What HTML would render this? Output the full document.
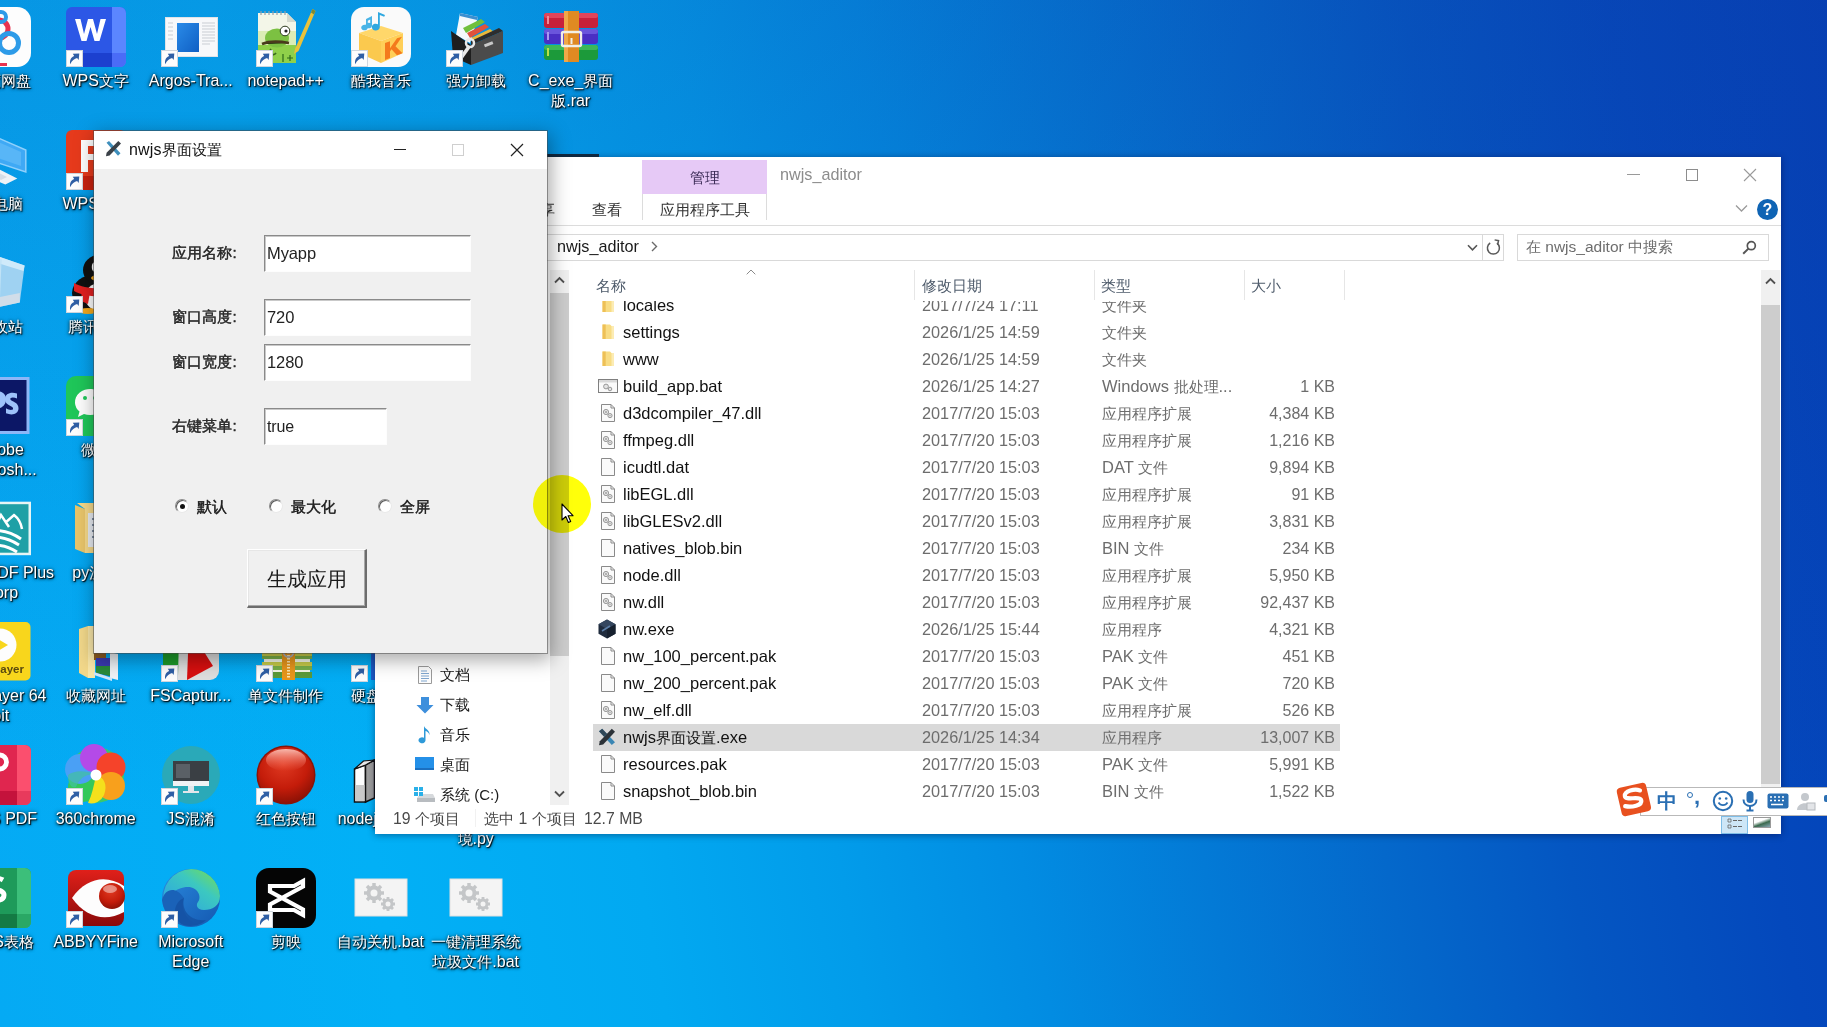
<!DOCTYPE html>
<html><head><meta charset="utf-8"><title>desktop</title>
<style>
*{margin:0;padding:0;box-sizing:border-box}
html,body{width:1827px;height:1027px;overflow:hidden;background:#0390e2}
body{font-family:"Liberation Sans",sans-serif;color:#1b1b1b}
#root{position:relative;width:1827px;height:1027px;overflow:hidden}
.abs{position:absolute}
#wall{position:absolute;left:0;top:0;width:1827px;height:1027px;
 background:linear-gradient(180deg,rgba(20,60,160,.20) 0%,rgba(20,60,160,.14) 25%,rgba(20,60,160,.07) 50%,rgba(20,60,160,0) 80%),linear-gradient(79deg,#05aaf4 0%,#02b0f6 20%,#02a9f1 33%,#029cea 43%,#028ce2 52%,#037ad6 61%,#0468cb 70%,#0456c2 79%,#0448bc 89%,#0440b6 100%);}
/* desktop icons */
.di{position:absolute;width:96px;height:110px;text-align:center;color:#fff;font-size:16px;line-height:20px;
 text-shadow:1px 1px 1px rgba(0,0,0,.9),0 1px 3px rgba(0,0,0,.85),0 0 4px rgba(0,0,0,.55);white-space:nowrap}
.di .ic{position:absolute;left:18px;top:0;width:60px;height:60px;overflow:visible}
.di .lb{position:absolute;left:-22px;width:140px;top:64px;text-align:center}
.di .sc{position:absolute;left:18px;top:43px;width:17px;height:17px}
/* explorer */
#exp{position:absolute;left:375px;top:157px;width:1406px;height:677px;background:#fff;font-size:16px;color:#1a1a1a;box-shadow:0 1px 7px rgba(0,0,40,.42)}
.flist{position:absolute;left:0;top:144px;width:1385px;height:507px;overflow:hidden}
.row{position:absolute;left:218px;width:747px;height:27px;line-height:27px;white-space:nowrap;font-size:16.5px;letter-spacing:0}
.row .nm{letter-spacing:0}
.row.sel{background:#d9d9d9}
.row .fi{position:absolute;left:226px;top:3.500px;width:18px;height:18px}
.row > span{position:absolute;top:0}
.row .fi{left:5.500px}
.row .nm{left:30px;color:#111}
.row .dt{left:329px;color:#6d6d6d}
.row .ty{left:509px;color:#6d6d6d}
.row .sz{right:5px;color:#6d6d6d;text-align:right}
/* dialog */
#dlg{position:absolute;left:94px;top:131px;width:453px;height:522px;background:#f0f0f0;
 box-shadow:0 0 0 1px rgba(70,70,70,.5),2px 5px 18px 2px rgba(0,0,0,.34)}
.hd{top:120px;font-size:15px;color:#4e5b6b}
.vs{top:113px;width:1px;height:30px;background:#e6e6e6}
.nv{left:65px;font-size:15px;color:#1a1a1a;line-height:20px}
.st{top:652px;font-size:15.800px;color:#4a4a4a;line-height:20px}
.lbl{-webkit-text-stroke:.35px #2a2a2a;left:79px;font-size:15px;line-height:20px;color:#2a2a2a;letter-spacing:.1px;text-shadow:0 0 .6px rgba(0,0,0,.5)}
.inp{letter-spacing:-.1px;background:#fff;border-top:1px solid #8a8a8a;border-left:1px solid #8a8a8a;border-right:1px solid #fdfdfd;border-bottom:1px solid #fdfdfd;box-shadow:inset 1px 1px 0 #c9c9c9;font-size:16.500px;line-height:35px;padding-left:2px;color:#222}
.rad{width:14px;height:14px;border-radius:50%;background:#fff;border:1px solid #8b8b8b;border-right-color:#e9e9e9;border-bottom-color:#e9e9e9;box-shadow:inset 1px 1px 0 #5a5a5a}
.rad i{position:absolute;left:4px;top:4px;width:5px;height:5px;border-radius:50%;background:#111}
.rl{-webkit-text-stroke:.35px #222;top:366px;font-size:15px;line-height:20px;color:#222;text-shadow:0 0 .6px rgba(0,0,0,.5)}
.c{font-size:.9375em}
.row .dt{font-size:16.300px}
.row .sz{font-size:16px}

</style></head><body>
<div id="root">
<div id="wall"></div>
<svg width="0" height="0" style="position:absolute"><defs>
<linearGradient id="gA" x1="0" y1="0" x2="1" y2="1"><stop offset="0" stop-color="#2a8be8"/><stop offset="1" stop-color="#0f5fc4"/></linearGradient>
<radialGradient id="gR" cx=".45" cy=".3" r=".8"><stop offset="0" stop-color="#e03a22"/><stop offset=".55" stop-color="#c41c0a"/><stop offset="1" stop-color="#7a0e04"/></radialGradient>
<linearGradient id="gRh" x1="0" y1="0" x2="0" y2="1"><stop offset="0" stop-color="rgba(255,210,200,.85)"/><stop offset="1" stop-color="rgba(255,120,100,0)"/></linearGradient>
<linearGradient id="gAb" x1="0" y1="0" x2="0" y2="1"><stop offset="0" stop-color="#e0201a"/><stop offset="1" stop-color="#8a0a0a"/></linearGradient>
<linearGradient id="gE1" x1="0" y1="0" x2="1" y2="1"><stop offset="0" stop-color="#2a8adf"/><stop offset="1" stop-color="#1458b0"/></linearGradient>
<linearGradient id="gE2" x1="0" y1="1" x2="1" y2="0"><stop offset="0" stop-color="#2aa0e6"/><stop offset=".6" stop-color="#3cc8c0"/><stop offset="1" stop-color="#7ae04a"/></linearGradient>
</defs></svg>
<div class="di" style="left:-47.3px;top:7px"><svg class="ic" viewBox="0 0 60 60"><rect x="0" y="0" width="60" height="60" rx="14" fill="#fdfdfd"/><circle cx="28" cy="22" r="9" fill="none" stroke="#e8334f" stroke-width="5"/><circle cx="38" cy="36" r="9.500" fill="none" stroke="#2d9be8" stroke-width="5"/><circle cx="30" cy="10" r="5" fill="none" stroke="#2d9be8" stroke-width="4"/><rect x="20" y="56" width="16" height="3" fill="#e8334f"/></svg><div class="lb"><span class="c">百度网盘</span></div></div>
<div class="di" style="left:47.7px;top:7px"><svg class="ic" viewBox="0 0 60 60"><rect x="0" y="0" width="60" height="60" rx="6" fill="#2c57e6"/><path d="M46 0h8a6 6 0 0 1 6 6v48a6 6 0 0 1-6 6h-8z" fill="#5b86ff"/><path d="M0 46h46v14H6a6 6 0 0 1-6-6z" fill="#1c40cf"/><path d="M46 46h14v8a6 6 0 0 1-6 6h-8z" fill="#4a6cf7"/><path d="M9 12h5.500l3.500 15 4-15h5l4 15 3.500-15H40l-6.500 22h-5L24.500 20l-4 14h-5z" fill="#fff"/></svg><svg class="sc" viewBox="0 0 17 17"><rect x=".5" y=".5" width="16" height="16" fill="#fdfdfd" stroke="#cfd6de"/><path d="M4.200 14.200c-.8-4 .8-7 4-8.200L6.800 3.800l6.500-.3-.6 6.500-1.600-2C8.500 8.600 5.800 10.500 4.200 14.200z" fill="#2f5fa5"/></svg><div class="lb">WPS<span class="c">文字</span></div></div>
<div class="di" style="left:142.7px;top:7px"><svg class="ic" viewBox="0 0 60 60"><rect x="4.500" y="10.500" width="52" height="39" fill="#f7f8fa" stroke="#dfe3e8"/><rect x="16" y="16" width="22" height="29" fill="#1573d8"/><rect x="16" y="16" width="22" height="29" fill="url(#gA)"/><path d="M7 16h5M7 20h5M7 24h5M7 28h5M7 32h5" stroke="#c9cdd3" stroke-width="1"/><path d="M41 16h13M41 19h13M41 22h13M41 25h13M41 28h13M41 31h13M41 34h13M41 37h8" stroke="#c9cdd3" stroke-width="1"/></svg><svg class="sc" viewBox="0 0 17 17"><rect x=".5" y=".5" width="16" height="16" fill="#fdfdfd" stroke="#cfd6de"/><path d="M4.200 14.200c-.8-4 .8-7 4-8.200L6.800 3.800l6.500-.3-.6 6.500-1.600-2C8.500 8.600 5.800 10.500 4.200 14.200z" fill="#2f5fa5"/></svg><div class="lb">Argos-Tra...</div></div>
<div class="di" style="left:237.7px;top:7px"><svg class="ic" viewBox="0 0 60 60"><path d="M2 6h29l9 9v41H2z" fill="#f3f6e8"/><path d="M2 32h38v24H2z" fill="#8fd04a"/><path d="M2 24h38v14H2z" fill="#dcedb6"/><path d="M31 6v9h9z" fill="#d5d9cd"/><path d="M5 4v4M9 4v4M13 4v4M17 4v4M21 4v4M25 4v4M29 4v4" stroke="#9aa0a6" stroke-width="1.200"/><ellipse cx="21" cy="31" rx="12" ry="9.500" fill="#7cc142"/><circle cx="29" cy="24" r="4.800" fill="#fff" stroke="#2c3a1c" stroke-width="1"/><circle cx="30" cy="24" r="1.600" fill="#222"/><path d="M6 37c7-3 16-3 27-1" stroke="#4a3b1c" stroke-width="2.600"/><path d="M15 42c-3 4 2 8 5 4" stroke="#3b6a1c" stroke-width="1.800" fill="none"/><path d="M56.500 2l3 2-17 40-4.500 3 1.200-5.500z" fill="#e9c23a"/><path d="M56.500 2l3 2-1.500 3.500-3-2z" fill="#7a8a3a"/><path d="M27 47v8M31 51h6M34 48v6" stroke="#2c6a1c" stroke-width="1.200"/></svg><svg class="sc" viewBox="0 0 17 17"><rect x=".5" y=".5" width="16" height="16" fill="#fdfdfd" stroke="#cfd6de"/><path d="M4.200 14.200c-.8-4 .8-7 4-8.200L6.800 3.800l6.500-.3-.6 6.500-1.600-2C8.500 8.600 5.800 10.500 4.200 14.200z" fill="#2f5fa5"/></svg><div class="lb">notepad++</div></div>
<div class="di" style="left:332.7px;top:7px"><svg class="ic" viewBox="0 0 60 60"><rect x="0" y="0" width="60" height="60" rx="13" fill="#fafafa"/><path d="M8 26l22-7 22 7-22 8z" fill="#ffd76a"/><path d="M8 26v20l22 10V34z" fill="#fbc94e"/><path d="M30 34v22l22-10V26z" fill="#ffcf58"/><path d="M34 36l5-1.800v7l7-10 5-1.500-6.500 9.500 7 7-5.500 2-5.500-6-1.500 2.200v6.600l-5 2z" fill="#f47a1c"/><path d="M15 12l6-3v9.500a3.300 2.800 0 1 1-1.800-2.500V12.500l-2.400 1.200v6.800a3.300 2.800 0 1 1-1.800-2.500z" fill="#4ab4e6"/><path d="M27 5l7 3-.8 1.800-4.400-1.800v12a4 3.400 0 1 1-1.800-2.800z" fill="#2fa8e0"/></svg><svg class="sc" viewBox="0 0 17 17"><rect x=".5" y=".5" width="16" height="16" fill="#fdfdfd" stroke="#cfd6de"/><path d="M4.200 14.200c-.8-4 .8-7 4-8.200L6.800 3.800l6.500-.3-.6 6.500-1.600-2C8.500 8.600 5.800 10.500 4.200 14.200z" fill="#2f5fa5"/></svg><div class="lb"><span class="c">酷我音乐</span></div></div>
<div class="di" style="left:427.7px;top:7px"><svg class="ic" viewBox="0 0 60 60"><path d="M14 6l18 4-8 26-14-8z" fill="#f4f8fb"/><path d="M14 6l18 4-1 3-17-4z" fill="#3b8fd0"/><path d="M17 21l18-9 4 3-19 11z" fill="#6fbf3c"/><path d="M21 26l18-9 4 3-19 11z" fill="#e0523c"/><path d="M25 31l19-9 4 3-20 11z" fill="#e9b83a"/><path d="M5 24l20 14v20L7 50z" fill="#1e1e1e"/><path d="M25 38l32-14v22L25 58z" fill="#4b4b4b"/><path d="M25 38l32-14-4-3-28 13z" fill="#2d2d2d"/><rect x="38" y="36" width="9" height="3" fill="#c8c8c8" transform="rotate(-22 42 37)"/><path d="M12 52l10-14 3 2-10 14z" fill="#e8e8e8"/><circle cx="24" cy="36" r="4" fill="none" stroke="#e8e8e8" stroke-width="2.500"/></svg><svg class="sc" viewBox="0 0 17 17"><rect x=".5" y=".5" width="16" height="16" fill="#fdfdfd" stroke="#cfd6de"/><path d="M4.200 14.200c-.8-4 .8-7 4-8.200L6.800 3.800l6.500-.3-.6 6.500-1.600-2C8.500 8.600 5.800 10.500 4.200 14.200z" fill="#2f5fa5"/></svg><div class="lb"><span class="c">强力卸载</span></div></div>
<div class="di" style="left:522.7px;top:7px"><svg class="ic" viewBox="0 0 60 60"><rect x="3" y="6" width="54" height="15" rx="3" fill="#c8203a"/><rect x="3" y="6" width="54" height="5" rx="2.500" fill="#e0455a"/><rect x="3" y="22" width="54" height="15" rx="3" fill="#4a2fc4"/><rect x="3" y="22" width="54" height="5" rx="2.500" fill="#6a55dc"/><rect x="3" y="38" width="54" height="15" rx="3" fill="#1c9a3a"/><rect x="3" y="38" width="54" height="5" rx="2.500" fill="#3cb858"/><rect x="23" y="4" width="15" height="51" fill="#e08a22"/><rect x="23" y="4" width="4" height="51" fill="#f0a848"/><rect x="21" y="25" width="19" height="14" rx="1.500" fill="none" stroke="#f2efe6" stroke-width="2.400"/><rect x="29.500" y="31" width="2" height="6" fill="#f2efe6"/><rect x="6" y="9" width="2" height="8" fill="#f08a9a"/><rect x="6" y="25" width="2" height="8" fill="#a89af0"/><rect x="6" y="41" width="2" height="8" fill="#b8e04a"/></svg><div class="lb">C_exe_<span class="c">界面</span><br><span class="c">版</span>.rar</div></div>
<div class="di" style="left:-47.3px;top:130px"><svg class="ic" viewBox="0 0 60 60"><path d="M0 -4L54.800 20v22L0 24z" fill="#3fa9f5"/><path d="M0 -4L54.800 20v22L0 24z" fill="none" stroke="#8fd0fb" stroke-width="1.500"/><path d="M4 2l46 20v14L4 20z" fill="#58b6f7"/><path d="M10 30l36.300 18.400-12 6.100L10 44z" fill="#eef2f6"/><path d="M22 40l14 7-6 3-12-6z" fill="#d5dde6"/></svg><div class="lb"><span class="c">此电脑</span></div></div>
<div class="di" style="left:47.7px;top:130px"><svg class="ic" viewBox="0 0 60 60"><rect x="0" y="0" width="60" height="60" rx="6" fill="#e63a1c"/><path d="M0 46h60v8a6 6 0 0 1-6 6H6a6 6 0 0 1-6-6z" fill="#c9220f"/><path d="M15 10h22v6H22v8h13v6H22v12h-7z" fill="#fff"/></svg><svg class="sc" viewBox="0 0 17 17"><rect x=".5" y=".5" width="16" height="16" fill="#fdfdfd" stroke="#cfd6de"/><path d="M4.200 14.200c-.8-4 .8-7 4-8.200L6.800 3.800l6.500-.3-.6 6.500-1.600-2C8.500 8.600 5.800 10.500 4.200 14.200z" fill="#2f5fa5"/></svg><div class="lb">WPS<span class="c">演示</span></div></div>
<div class="di" style="left:-47.3px;top:253px"><svg class="ic" viewBox="0 0 60 60"><path d="M0 -6L53.600 12.500 48.800 49.500 0 60z" fill="#9fd2f2"/><path d="M0 -6L53.600 12.500 52.500 18 0 2z" fill="#cfeafa"/><path d="M0 50l48.800-10-0 9.500L0 60z" fill="#d9dfe8" opacity=".85"/><path d="M30 6l-2 50" stroke="#c0e2f6" stroke-width="1.200"/></svg><div class="lb"><span class="c">回收站</span></div></div>
<div class="di" style="left:47.7px;top:253px"><svg class="ic" viewBox="0 0 60 60"><ellipse cx="31" cy="40" rx="25" ry="19" fill="#111"/><ellipse cx="33" cy="17" rx="16" ry="15" fill="#111"/><ellipse cx="34" cy="44" rx="15" ry="14" fill="#fdfdfd"/><path d="M8 30c12 7 36 7 50 0v8c-14 7-38 7-50 0z" fill="#e02020"/><path d="M16 36l8 3-2 12-7-3z" fill="#e02020"/><ellipse cx="35" cy="25" rx="10" ry="3.500" fill="#f5a81c"/><ellipse cx="29" cy="14" rx="3.200" ry="4.800" fill="#fff"/><ellipse cx="38" cy="14" rx="3.200" ry="4.800" fill="#fff"/><circle cx="30" cy="15" r="1.300" fill="#111"/><circle cx="37" cy="15" r="1.300" fill="#111"/><ellipse cx="22" cy="58" rx="10" ry="3" fill="#f5a81c"/><ellipse cx="46" cy="58" rx="10" ry="3" fill="#f5a81c"/></svg><svg class="sc" viewBox="0 0 17 17"><rect x=".5" y=".5" width="16" height="16" fill="#fdfdfd" stroke="#cfd6de"/><path d="M4.200 14.200c-.8-4 .8-7 4-8.200L6.800 3.800l6.500-.3-.6 6.500-1.600-2C8.500 8.600 5.800 10.500 4.200 14.200z" fill="#2f5fa5"/></svg><div class="lb"><span class="c">腾讯</span>QQ</div></div>
<div class="di" style="left:-47.3px;top:376px"><svg class="ic" viewBox="0 0 60 60"><rect x="1.500" y="1" width="57" height="57" fill="#8db6f7"/><rect x="4.500" y="4" width="51" height="51" fill="#0c1766"/><path d="M14 15h11c7 0 10 3.500 10 8.500S31 33 24 33h-3v9h-7zm7 5.500V28h3c2.500 0 4.500-1 4.500-3.800S26.500 20.500 24 20.500z" fill="#9ec2fb"/><path d="M46 22.500c-2-1-5-1.500-6.200-.5-1.300 1 0 2.300 2 3.300 3 1.500 5.700 3 5.700 7 0 5.500-6 7.700-12.500 5v-5c3 2 6.500 2.200 7 .8.500-1.500-1-2.300-3-3.300-3-1.500-5-3.300-5-6.800 0-5.500 6-7.500 12-5.500z" fill="#9ec2fb"/></svg><div class="lb">Adobe<br>Photosh...</div></div>
<div class="di" style="left:47.7px;top:376px"><svg class="ic" viewBox="0 0 60 60"><rect x="0" y="0" width="60" height="60" rx="10" fill="#1fc659"/><path d="M9 27a15 13 0 1 1 9 11l-6 3 1.500-5.500A13 12 0 0 1 9 27z" fill="#fdfdfd"/><path d="M52 40a12 10.500 0 1 0-8 9.500l5 2.500-1.200-4.500A11 10 0 0 0 52 40z" fill="#f2fbf4"/><circle cx="19" cy="22" r="2" fill="#1fc659"/><circle cx="29" cy="22" r="2" fill="#1fc659"/></svg><svg class="sc" viewBox="0 0 17 17"><rect x=".5" y=".5" width="16" height="16" fill="#fdfdfd" stroke="#cfd6de"/><path d="M4.200 14.200c-.8-4 .8-7 4-8.200L6.800 3.800l6.500-.3-.6 6.500-1.600-2C8.500 8.600 5.800 10.500 4.200 14.200z" fill="#2f5fa5"/></svg><div class="lb"><span class="c">微信</span></div></div>
<div class="di" style="left:-47.3px;top:499px"><svg class="ic" viewBox="0 0 60 60"><rect x="0" y="2.700" width="60" height="53.500" fill="#e6f5f5"/><rect x="2.500" y="5.200" width="55" height="48.500" fill="#1fa0a6"/><path d="M10 50c10-6 24-5 36 3M8 43c12-7 26-6 40 3M8 36c12-7 28-6 42 4" stroke="#fff" stroke-width="3" fill="none"/><path d="M22 34l8-18 8 12M34 24l9-8c4 3 7 8 8 14" stroke="#fff" stroke-width="2.500" fill="none"/></svg><div class="lb">ower PDF Plus<br>Corp</div></div>
<div class="di" style="left:47.7px;top:499px"><svg class="ic" viewBox="0 0 60 60"><path d="M9 6l10 4v44L9 50z" fill="#e9c56a"/><path d="M11 4h30v50l-22 0V10z" fill="#f5d98a"/><path d="M22 14h22v34H22z" fill="#e8ecf2"/><path d="M26 20h14M26 26h14M26 32h14M26 38h14" stroke="#7a8aa0" stroke-width="2"/><path d="M30 34c6-2 10 2 8 10" stroke="#3f5f9a" stroke-width="4" fill="none"/></svg><div class="lb">py<span class="c">汉化</span></div></div>
<div class="di" style="left:-47.3px;top:622px"><svg class="ic" viewBox="0 0 60 60"><rect x="0" y="0" width="59.500" height="58.500" rx="5" fill="#f8d61c"/><circle cx="29" cy="23" r="16.500" fill="#fdfdfd"/><path d="M21 13.500L37 23 21 32.500z" fill="#f8d61c"/><text x="29.300" y="51" font-family="Liberation Sans,sans-serif" font-weight="bold" font-size="11.500" fill="#5a4a10" style="text-shadow:none">ayer</text></svg><div class="lb">PotPlayer 64<br>bit</div></div>
<div class="di" style="left:47.7px;top:622px"><svg class="ic" viewBox="0 0 60 60"><path d="M13 7l9-3v52l-9-5z" fill="#f2d88a"/><path d="M22 4h7v52h-7z" fill="#f8e6a8"/><path d="M28 12h10v14H28z" fill="#c87a2a"/><path d="M28 26h12v12H28z" fill="#8a5a20"/><path d="M30 36h14v18l-14-3z" fill="#3a3ab0"/><path d="M30 44h14v10l-14-3z" fill="#2a8a3a"/><path d="M44 30l8 2v26l-8-2z" fill="#eef2f6"/><path d="M28 50l18 6v3l-18-6z" fill="#cfe6fa"/></svg><div class="lb"><span class="c">收藏网址</span></div></div>
<div class="di" style="left:142.7px;top:622px"><svg class="ic" viewBox="0 0 60 60"><rect x="2" y="0" width="56" height="58" rx="9" fill="#dedede"/><path d="M2 10l16 4-1 40H2z" fill="#1c9a2a"/><path d="M28 6l24 38-26 14z" fill="#d80f0f"/></svg><svg class="sc" viewBox="0 0 17 17"><rect x=".5" y=".5" width="16" height="16" fill="#fdfdfd" stroke="#cfd6de"/><path d="M4.200 14.200c-.8-4 .8-7 4-8.200L6.800 3.800l6.500-.3-.6 6.500-1.600-2C8.500 8.600 5.800 10.500 4.200 14.200z" fill="#2f5fa5"/></svg><div class="lb">FSCaptur...</div></div>
<div class="di" style="left:237.7px;top:622px"><svg class="ic" viewBox="0 0 60 60"><path d="M8 8h46v48H8z" fill="#f4f6e8"/><path d="M6 10h50v5H6zM6 20h50v5H6zM6 30h50v5H6zM6 40h50v5H6z" fill="#c8cc4a"/><path d="M6 14h50v3H6zM6 24h50v3H6zM6 34h50v3H6zM6 44h50v4H6z" fill="#7ab04a"/><path d="M6 50h50v6H6z" fill="#5a9a3a"/><rect x="26" y="4" width="13" height="54" fill="#e8961c"/><path d="M32.500 6v50" stroke="#fbe6b0" stroke-width="3" stroke-dasharray="1.500 1.500"/><circle cx="32.500" cy="30" r="5" fill="none" stroke="#b0b4b8" stroke-width="2"/></svg><svg class="sc" viewBox="0 0 17 17"><rect x=".5" y=".5" width="16" height="16" fill="#fdfdfd" stroke="#cfd6de"/><path d="M4.200 14.200c-.8-4 .8-7 4-8.200L6.800 3.800l6.500-.3-.6 6.500-1.600-2C8.500 8.600 5.800 10.500 4.200 14.200z" fill="#2f5fa5"/></svg><div class="lb"><span class="c">单文件制作</span></div></div>
<div class="di" style="left:332.7px;top:622px"><svg class="ic" viewBox="0 0 60 60"><rect x="20" y="0" width="14" height="58" fill="#1f5fd0"/><rect x="25" y="2" width="3" height="20" fill="#dfe8f8"/></svg><svg class="sc" viewBox="0 0 17 17"><rect x=".5" y=".5" width="16" height="16" fill="#fdfdfd" stroke="#cfd6de"/><path d="M4.200 14.200c-.8-4 .8-7 4-8.200L6.800 3.800l6.500-.3-.6 6.500-1.600-2C8.500 8.600 5.800 10.500 4.200 14.200z" fill="#2f5fa5"/></svg><div class="lb"><span class="c">硬盘检测</span></div></div>
<div class="di" style="left:-47.3px;top:745px"><svg class="ic" viewBox="0 0 60 60"><rect x="0" y="0" width="60" height="60" rx="6" fill="#e0264f"/><path d="M46 0h8a6 6 0 0 1 6 6v48a6 6 0 0 1-6 6h-8z" fill="#fb4f6e"/><path d="M0 46h46v14H6a6 6 0 0 1-6-6z" fill="#c4123c"/><path d="M46 46h14v8a6 6 0 0 1-6 6h-8z" fill="#e83a5c"/><circle cx="28.500" cy="17" r="7" fill="none" stroke="#fff" stroke-width="4.800"/><rect x="17" y="7.600" width="5" height="26" fill="#fff"/></svg><div class="lb">WPS PDF</div></div>
<div class="di" style="left:47.7px;top:745px"><svg class="ic" viewBox="0 0 60 60"><circle cx="30" cy="30" r="28" fill="#3cc86a"/><circle cx="17" cy="42" r="15" fill="#34c85a"/><circle cx="14" cy="24" r="15" fill="#4aa0f5"/><circle cx="28" cy="13" r="14" fill="#b44ae8"/><circle cx="45" cy="22" r="14.500" fill="#f5432a"/><circle cx="45" cy="41" r="14" fill="#f8a01c"/><path d="M30 30c8 2 12 10 8 20a14 14 0 0 1-16 8c4-8 6-18 8-28z" fill="#f4e01c"/><path d="M30 30c-8-2-16 2-20 12-6 2-8-6-8-12 8-6 20-4 28 0z" fill="#42c0a0" opacity=".7"/><circle cx="30" cy="30" r="5.500" fill="#fff"/></svg><svg class="sc" viewBox="0 0 17 17"><rect x=".5" y=".5" width="16" height="16" fill="#fdfdfd" stroke="#cfd6de"/><path d="M4.200 14.200c-.8-4 .8-7 4-8.200L6.800 3.800l6.500-.3-.6 6.500-1.600-2C8.500 8.600 5.800 10.500 4.200 14.200z" fill="#2f5fa5"/></svg><div class="lb">360chrome</div></div>
<div class="di" style="left:142.7px;top:745px"><svg class="ic" viewBox="0 0 60 60"><circle cx="30" cy="30" r="29" fill="#2aa9b8"/><rect x="12" y="16" width="36" height="22" fill="#3a3f44"/><rect x="12" y="36" width="36" height="5" fill="#f0f2f4"/><rect x="15" y="19" width="14" height="14" fill="#5a6066"/><path d="M27 41h6v5h-6zM22 46h16v2H22z" fill="#e2e6ea"/></svg><svg class="sc" viewBox="0 0 17 17"><rect x=".5" y=".5" width="16" height="16" fill="#fdfdfd" stroke="#cfd6de"/><path d="M4.200 14.200c-.8-4 .8-7 4-8.200L6.800 3.800l6.500-.3-.6 6.500-1.600-2C8.500 8.600 5.800 10.500 4.200 14.200z" fill="#2f5fa5"/></svg><div class="lb">JS<span class="c">混淆</span></div></div>
<div class="di" style="left:237.7px;top:745px"><svg class="ic" viewBox="0 0 60 60"><circle cx="30" cy="30" r="29.500" fill="#8a1408"/><circle cx="30" cy="30" r="28" fill="url(#gR)"/><ellipse cx="30" cy="15" rx="20" ry="11" fill="url(#gRh)"/></svg><svg class="sc" viewBox="0 0 17 17"><rect x=".5" y=".5" width="16" height="16" fill="#fdfdfd" stroke="#cfd6de"/><path d="M4.200 14.200c-.8-4 .8-7 4-8.200L6.800 3.800l6.500-.3-.6 6.500-1.600-2C8.500 8.600 5.800 10.500 4.200 14.200z" fill="#2f5fa5"/></svg><div class="lb"><span class="c">红色按钮</span></div></div>
<div class="di" style="left:332.7px;top:745px"><svg class="ic" viewBox="0 0 60 60"><path d="M3.500 24l11-4v37l-11 0z" fill="#fdfdfd" stroke="#111" stroke-width="1.500"/><path d="M14.500 20l9-5v38l-9 4z" fill="#9c9c9c" stroke="#111" stroke-width="1.500"/><path d="M3.500 24l9-8 11-1-9 5z" fill="#e8e8e8" stroke="#111" stroke-width="1.200"/><path d="M4.500 40h9v16h-9z" fill="#c9c9c9"/></svg><div class="lb">nodejs_<span class="c">安装</span></div></div>
<div class="di" style="left:-47.3px;top:868px"><svg class="ic" viewBox="0 0 60 60"><rect x="0" y="0" width="60" height="60" rx="6" fill="#1e9a5a"/><path d="M46 0h8a6 6 0 0 1 6 6v48a6 6 0 0 1-6 6h-8z" fill="#3cbf7a"/><path d="M0 46h46v14H6a6 6 0 0 1-6-6z" fill="#147a44"/><path d="M46 46h14v8a6 6 0 0 1-6 6h-8z" fill="#2aa865"/><path d="M32 12c-5-3-14-2-14 4 0 7 15 4 15 11 0 6-10 7-16 3" stroke="#fff" stroke-width="5" fill="none"/></svg><div class="lb">WPS<span class="c">表格</span></div></div>
<div class="di" style="left:47.7px;top:868px"><svg class="ic" viewBox="0 0 60 60"><rect x="2" y="2" width="56" height="56" rx="8" fill="url(#gAb)"/><path d="M6 30c14-20 34-24 52-12v26C40 54 20 50 6 30z" fill="#fdfdfd"/><circle cx="46" cy="28" r="13" fill="url(#gR)"/><ellipse cx="44" cy="21" rx="7" ry="4" fill="rgba(255,255,255,.45)"/></svg><svg class="sc" viewBox="0 0 17 17"><rect x=".5" y=".5" width="16" height="16" fill="#fdfdfd" stroke="#cfd6de"/><path d="M4.200 14.200c-.8-4 .8-7 4-8.200L6.800 3.800l6.500-.3-.6 6.500-1.600-2C8.500 8.600 5.800 10.500 4.200 14.200z" fill="#2f5fa5"/></svg><div class="lb">ABBYYFine</div></div>
<div class="di" style="left:142.7px;top:868px"><svg class="ic" viewBox="0 0 60 60"><circle cx="30" cy="30" r="29" fill="url(#gE1)"/><path d="M30 1a29 29 0 0 1 29 27c0 10-8 14-16 14-8 0-8-6-6-8 4-5 0-15-10-15-12 0-22 10-24 18A29 29 0 0 1 30 1z" fill="url(#gE2)"/><path d="M23 30c-4 10 2 24 16 27A29 29 0 0 1 1 32c3-12 14-14 22-2z" fill="#1a62b8"/><path d="M23 30c-3 12 6 24 22 22-6 6-16 7-22 5C10 52 12 34 23 30z" fill="#134a9a" opacity=".6"/></svg><svg class="sc" viewBox="0 0 17 17"><rect x=".5" y=".5" width="16" height="16" fill="#fdfdfd" stroke="#cfd6de"/><path d="M4.200 14.200c-.8-4 .8-7 4-8.200L6.800 3.800l6.500-.3-.6 6.500-1.600-2C8.500 8.600 5.800 10.500 4.200 14.200z" fill="#2f5fa5"/></svg><div class="lb">Microsoft<br>Edge</div></div>
<div class="di" style="left:237.7px;top:868px"><svg class="ic" viewBox="0 0 60 60"><rect x="0" y="0" width="60" height="60" rx="13" fill="#050505"/><path d="M14 18h24l9-5v5.500L14 36.500V42h24l9 5v-5.500L14 23.500z" fill="none" stroke="#fff" stroke-width="4.200" stroke-linejoin="miter"/></svg><svg class="sc" viewBox="0 0 17 17"><rect x=".5" y=".5" width="16" height="16" fill="#fdfdfd" stroke="#cfd6de"/><path d="M4.200 14.200c-.8-4 .8-7 4-8.200L6.800 3.800l6.500-.3-.6 6.500-1.600-2C8.500 8.600 5.800 10.500 4.200 14.200z" fill="#2f5fa5"/></svg><div class="lb"><span class="c">剪映</span></div></div>
<div class="di" style="left:332.7px;top:868px"><svg class="ic" viewBox="0 0 60 60"><rect x="4" y="11" width="52" height="37" fill="#f4f4f4" stroke="#e0e0e0"/><g fill="#c4c6c8"><circle cx="23" cy="25" r="7.500"/><circle cx="37" cy="36" r="5.500"/></g><g stroke="#c4c6c8" stroke-width="3.500"><path d="M23 15v20M13 25h20M16 18l14 14M30 18L16 32"/><path d="M37 29v14M30 36h14M32 31l10 10M42 31L32 41" stroke-width="2.800"/></g><circle cx="23" cy="25" r="3.500" fill="#f4f4f4"/><circle cx="37" cy="36" r="2.500" fill="#f4f4f4"/></svg><div class="lb"><span class="c">自动关机</span>.bat</div></div>
<div class="di" style="left:427.7px;top:868px"><svg class="ic" viewBox="0 0 60 60"><rect x="4" y="11" width="52" height="37" fill="#f4f4f4" stroke="#e0e0e0"/><g fill="#c4c6c8"><circle cx="23" cy="25" r="7.500"/><circle cx="37" cy="36" r="5.500"/></g><g stroke="#c4c6c8" stroke-width="3.500"><path d="M23 15v20M13 25h20M16 18l14 14M30 18L16 32"/><path d="M37 29v14M30 36h14M32 31l10 10M42 31L32 41" stroke-width="2.800"/></g><circle cx="23" cy="25" r="3.500" fill="#f4f4f4"/><circle cx="37" cy="36" r="2.500" fill="#f4f4f4"/></svg><div class="lb"><span class="c">一键清理系统</span><br><span class="c">垃圾文件</span>.bat</div></div>
<div class="di" style="left:427.700px;top:745px"><div class="lb" style="top:84px"><span class="c">境</span>.py</div></div>
<div id="exp">
 <!-- dark sliver of window behind, top-left -->
 <div class="abs" style="left:172px;top:-3px;width:52px;height:3px;background:#10283f"></div>
 <!-- title row -->
 <div class="abs" style="left:267px;top:3px;width:125px;height:34px;background:#e6c9f6"></div>
 <div class="abs t16" style="left:267px;top:12px;width:125px;text-align:center;color:#3a2a55;font-size:15px">管理</div>
 <div class="abs" style="left:405px;top:8px;font-size:16.200px;color:#8c8c8c;letter-spacing:0">nwjs_aditor</div>
 <!-- window buttons -->
 <div class="abs" style="left:1252px;top:17px;width:13px;height:1px;background:#9a9a9a"></div>
 <div class="abs" style="left:1311px;top:12px;width:12px;height:12px;border:1px solid #8d8d8d"></div>
 <svg class="abs" style="left:1368px;top:11px" width="14" height="14" viewBox="0 0 14 14"><path d="M1 1l12 12M13 1L1 13" stroke="#9a9a9a" stroke-width="1.1" fill="none"/></svg>
 <!-- ribbon tabs -->
 <div class="abs" style="left:165px;top:44px;font-size:15px;color:#333">享</div>
 <div class="abs" style="left:217px;top:44px;font-size:15px;color:#333">查看</div>
 <div class="abs" style="left:267px;top:37px;width:125px;height:26px;border-left:1px solid #dcdcdc;border-right:1px solid #dcdcdc"></div>
 <div class="abs" style="left:267px;top:44px;width:125px;text-align:center;font-size:15px;color:#333">应用程序工具</div>
 <svg class="abs" style="left:1360px;top:47px" width="13" height="9" viewBox="0 0 13 9"><path d="M1 1.5l5.5 5.5L12 1.5" stroke="#9a9a9a" stroke-width="1.3" fill="none"/></svg>
 <div class="abs" style="left:1382px;top:42px;width:21px;height:21px;border-radius:50%;background:#0f64b4;color:#fff;font-size:16px;font-weight:bold;text-align:center;line-height:21px">?</div>
 <div class="abs" style="left:0;top:68px;width:1406px;height:1px;background:#dcdcdc"></div>
 <!-- address bar -->
 <div class="abs" style="left:100px;top:77px;width:1008px;height:27px;border:1px solid #d9d9d9;background:#fff"></div>
 <div class="abs" style="left:1107px;top:77px;width:22px;height:27px;border:1px solid #d9d9d9;background:#fff"></div>
 <div class="abs" style="left:182px;top:80px;font-size:16.200px;color:#1a1a1a;letter-spacing:0">nwjs_aditor</div>
 <svg class="abs" style="left:276px;top:84px" width="7" height="11" viewBox="0 0 7 11"><path d="M1 1l4.5 4.5L1 10" stroke="#6a6a6a" stroke-width="1.4" fill="none"/></svg>
 <svg class="abs" style="left:1092px;top:87px" width="11" height="8" viewBox="0 0 11 8"><path d="M1 1.2l4.5 4.6L10 1.2" stroke="#555" stroke-width="1.6" fill="none"/></svg>
 <svg class="abs" style="left:1110px;top:82px" width="17" height="17" viewBox="0 0 17 17"><path d="M11.9 4.2A6 6 0 1 1 5.2 4" stroke="#5a5a5a" stroke-width="1.5" fill="none"/><path d="M8 1v5.2h5" fill="none" stroke="#5a5a5a" stroke-width="0"/><path d="M9.2 1.2h4v4.2" fill="none" stroke="#5a5a5a" stroke-width="1.5" transform="rotate(12 11 3)"/></svg>
 <!-- search -->
 <div class="abs" style="left:1142px;top:77px;width:252px;height:27px;border:1px solid #d9d9d9;background:#fff"></div>
 <div class="abs" style="left:1151px;top:81px;font-size:15.500px;color:#6d6d6d"><span class="c">在</span> nwjs_aditor <span class="c">中搜索</span></div>
 <svg class="abs" style="left:1367px;top:83px" width="15" height="15" viewBox="0 0 15 15"><circle cx="9.3" cy="5.7" r="4" stroke="#555" stroke-width="1.7" fill="none"/><path d="M6.4 8.6L1.2 13.8" stroke="#555" stroke-width="2"/></svg>
 <!-- nav scrollbar -->
 <div class="abs" style="left:175px;top:113px;width:19px;height:535px;background:#f0f0f0"></div>
 <div class="abs" style="left:175px;top:136px;width:19px;height:363px;background:#cdcdcd"></div>
 <svg class="abs" style="left:179px;top:119px" width="11" height="8" viewBox="0 0 11 8"><path d="M1 6.5L5.5 2 10 6.5" stroke="#505050" stroke-width="1.8" fill="none"/></svg>
 <svg class="abs" style="left:179px;top:633px" width="11" height="8" viewBox="0 0 11 8"><path d="M1 1.5L5.5 6 10 1.5" stroke="#505050" stroke-width="1.8" fill="none"/></svg>
 <!-- column headers -->
 <svg class="abs" style="left:371px;top:112px" width="10" height="6" viewBox="0 0 10 6"><path d="M.7 5.3L5 1l4.3 4.3" stroke="#8a8a8a" stroke-width="1" fill="none"/></svg>
 <div class="abs hd" style="left:221px">名称</div>
 <div class="abs hd" style="left:547px">修改日期</div>
 <div class="abs hd" style="left:726px">类型</div>
 <div class="abs hd" style="left:876px">大小</div>
 <div class="abs vs" style="left:539px"></div><div class="abs vs" style="left:719px"></div><div class="abs vs" style="left:869px"></div><div class="abs vs" style="left:969px"></div>
<div class="flist"><div class="row" style="top:-9.0px"><svg class="fi" viewBox="0 0 18 18"><path d="M3.500 1.500h7.500l1.500 1.500h2.500v13H3.500z" fill="#f8dc84"/><path d="M3.500 1.500h3.200v14.500H3.500z" fill="#eec057"/><path d="M12.500 3h2.500v13h-2.500z" fill="#fcecb4"/></svg><span class="nm">locales</span><span class="dt">2017/7/24 17:11</span><span class="ty"><span class="c">文件夹</span></span><span class="sz"></span></div><div class="row" style="top:18.0px"><svg class="fi" viewBox="0 0 18 18"><path d="M3.500 1.500h7.500l1.500 1.500h2.500v13H3.500z" fill="#f8dc84"/><path d="M3.500 1.500h3.200v14.500H3.500z" fill="#eec057"/><path d="M12.500 3h2.500v13h-2.500z" fill="#fcecb4"/></svg><span class="nm">settings</span><span class="dt">2026/1/25 14:59</span><span class="ty"><span class="c">文件夹</span></span><span class="sz"></span></div><div class="row" style="top:45.0px"><svg class="fi" viewBox="0 0 18 18"><path d="M3.500 1.500h7.500l1.500 1.500h2.500v13H3.500z" fill="#f8dc84"/><path d="M3.500 1.500h3.200v14.500H3.500z" fill="#eec057"/><path d="M12.500 3h2.500v13h-2.500z" fill="#fcecb4"/></svg><span class="nm">www</span><span class="dt">2026/1/25 14:59</span><span class="ty"><span class="c">文件夹</span></span><span class="sz"></span></div><div class="row" style="top:72.0px"><svg class="fi" style="width:20px;left:4.500px" viewBox="0 0 20 18"><rect x=".5" y="2.5" width="19" height="13" fill="#fafafa" stroke="#7f7f7f"/><rect x="1" y="3" width="18" height="2.5" fill="#d9d9d9"/><circle cx="8" cy="9.5" r="2.4" fill="#e4e4e4" stroke="#8f8f8f" stroke-width=".9"/><circle cx="12" cy="12" r="1.8" fill="#e4e4e4" stroke="#8f8f8f" stroke-width=".9"/></svg><span class="nm">build_app.bat</span><span class="dt">2026/1/25 14:27</span><span class="ty">Windows <span class="c">批处理</span>...</span><span class="sz">1 KB</span></div><div class="row" style="top:99.0px"><svg class="fi" viewBox="0 0 18 18"><path d="M2.5 .5h9.5l3.5 3.5v13.5h-13z" fill="#fafafa" stroke="#8a8a8a"/><path d="M12 .5v3.5h3.5" fill="none" stroke="#8a8a8a"/><circle cx="7" cy="8" r="2.6" fill="#e4e4e4" stroke="#8f8f8f" stroke-width=".9"/><circle cx="7" cy="8" r=".9" fill="#9a9a9a"/><circle cx="11" cy="11.6" r="2.1" fill="#e4e4e4" stroke="#8f8f8f" stroke-width=".9"/><circle cx="11" cy="11.6" r=".7" fill="#9a9a9a"/></svg><span class="nm">d3dcompiler_47.dll</span><span class="dt">2017/7/20 15:03</span><span class="ty"><span class="c">应用程序扩展</span></span><span class="sz">4,384 KB</span></div><div class="row" style="top:126.0px"><svg class="fi" viewBox="0 0 18 18"><path d="M2.5 .5h9.5l3.5 3.5v13.5h-13z" fill="#fafafa" stroke="#8a8a8a"/><path d="M12 .5v3.5h3.5" fill="none" stroke="#8a8a8a"/><circle cx="7" cy="8" r="2.6" fill="#e4e4e4" stroke="#8f8f8f" stroke-width=".9"/><circle cx="7" cy="8" r=".9" fill="#9a9a9a"/><circle cx="11" cy="11.6" r="2.1" fill="#e4e4e4" stroke="#8f8f8f" stroke-width=".9"/><circle cx="11" cy="11.6" r=".7" fill="#9a9a9a"/></svg><span class="nm">ffmpeg.dll</span><span class="dt">2017/7/20 15:03</span><span class="ty"><span class="c">应用程序扩展</span></span><span class="sz">1,216 KB</span></div><div class="row" style="top:153.0px"><svg class="fi" viewBox="0 0 18 18"><path d="M2.5 .5h9.5l3.5 3.5v13.5h-13z" fill="#fafafa" stroke="#8a8a8a"/><path d="M12 .5v3.5h3.5" fill="none" stroke="#8a8a8a"/></svg><span class="nm">icudtl.dat</span><span class="dt">2017/7/20 15:03</span><span class="ty">DAT <span class="c">文件</span></span><span class="sz">9,894 KB</span></div><div class="row" style="top:180.0px"><svg class="fi" viewBox="0 0 18 18"><path d="M2.5 .5h9.5l3.5 3.5v13.5h-13z" fill="#fafafa" stroke="#8a8a8a"/><path d="M12 .5v3.5h3.5" fill="none" stroke="#8a8a8a"/><circle cx="7" cy="8" r="2.6" fill="#e4e4e4" stroke="#8f8f8f" stroke-width=".9"/><circle cx="7" cy="8" r=".9" fill="#9a9a9a"/><circle cx="11" cy="11.6" r="2.1" fill="#e4e4e4" stroke="#8f8f8f" stroke-width=".9"/><circle cx="11" cy="11.6" r=".7" fill="#9a9a9a"/></svg><span class="nm">libEGL.dll</span><span class="dt">2017/7/20 15:03</span><span class="ty"><span class="c">应用程序扩展</span></span><span class="sz">91 KB</span></div><div class="row" style="top:207.0px"><svg class="fi" viewBox="0 0 18 18"><path d="M2.5 .5h9.5l3.5 3.5v13.5h-13z" fill="#fafafa" stroke="#8a8a8a"/><path d="M12 .5v3.5h3.5" fill="none" stroke="#8a8a8a"/><circle cx="7" cy="8" r="2.6" fill="#e4e4e4" stroke="#8f8f8f" stroke-width=".9"/><circle cx="7" cy="8" r=".9" fill="#9a9a9a"/><circle cx="11" cy="11.6" r="2.1" fill="#e4e4e4" stroke="#8f8f8f" stroke-width=".9"/><circle cx="11" cy="11.6" r=".7" fill="#9a9a9a"/></svg><span class="nm">libGLESv2.dll</span><span class="dt">2017/7/20 15:03</span><span class="ty"><span class="c">应用程序扩展</span></span><span class="sz">3,831 KB</span></div><div class="row" style="top:234.0px"><svg class="fi" viewBox="0 0 18 18"><path d="M2.5 .5h9.5l3.5 3.5v13.5h-13z" fill="#fafafa" stroke="#8a8a8a"/><path d="M12 .5v3.5h3.5" fill="none" stroke="#8a8a8a"/></svg><span class="nm">natives_blob.bin</span><span class="dt">2017/7/20 15:03</span><span class="ty">BIN <span class="c">文件</span></span><span class="sz">234 KB</span></div><div class="row" style="top:261.0px"><svg class="fi" viewBox="0 0 18 18"><path d="M2.5 .5h9.5l3.5 3.5v13.5h-13z" fill="#fafafa" stroke="#8a8a8a"/><path d="M12 .5v3.5h3.5" fill="none" stroke="#8a8a8a"/><circle cx="7" cy="8" r="2.6" fill="#e4e4e4" stroke="#8f8f8f" stroke-width=".9"/><circle cx="7" cy="8" r=".9" fill="#9a9a9a"/><circle cx="11" cy="11.6" r="2.1" fill="#e4e4e4" stroke="#8f8f8f" stroke-width=".9"/><circle cx="11" cy="11.6" r=".7" fill="#9a9a9a"/></svg><span class="nm">node.dll</span><span class="dt">2017/7/20 15:03</span><span class="ty"><span class="c">应用程序扩展</span></span><span class="sz">5,950 KB</span></div><div class="row" style="top:288.0px"><svg class="fi" viewBox="0 0 18 18"><path d="M2.5 .5h9.5l3.5 3.5v13.5h-13z" fill="#fafafa" stroke="#8a8a8a"/><path d="M12 .5v3.5h3.5" fill="none" stroke="#8a8a8a"/><circle cx="7" cy="8" r="2.6" fill="#e4e4e4" stroke="#8f8f8f" stroke-width=".9"/><circle cx="7" cy="8" r=".9" fill="#9a9a9a"/><circle cx="11" cy="11.6" r="2.1" fill="#e4e4e4" stroke="#8f8f8f" stroke-width=".9"/><circle cx="11" cy="11.6" r=".7" fill="#9a9a9a"/></svg><span class="nm">nw.dll</span><span class="dt">2017/7/20 15:03</span><span class="ty"><span class="c">应用程序扩展</span></span><span class="sz">92,437 KB</span></div><div class="row" style="top:315.0px"><svg class="fi" style="width:20px;height:20px;left:4px;top:3px" viewBox="0 0 20 20"><path d="M10 .5l8.5 4.7v9.6L10 19.5 1.5 14.8V5.2z" fill="#1f2b3d"/><path d="M10 .5l8.5 4.7L10 10 1.5 5.2z" fill="#34465f"/><path d="M10 10v9.5l8.5-4.7V5.2z" fill="#16202e"/><path d="M5 12l8-5" stroke="#5b7ea8" stroke-width="1.5"/></svg><span class="nm">nw.exe</span><span class="dt">2026/1/25 15:44</span><span class="ty"><span class="c">应用程序</span></span><span class="sz">4,321 KB</span></div><div class="row" style="top:342.0px"><svg class="fi" viewBox="0 0 18 18"><path d="M2.5 .5h9.5l3.5 3.5v13.5h-13z" fill="#fafafa" stroke="#8a8a8a"/><path d="M12 .5v3.5h3.5" fill="none" stroke="#8a8a8a"/></svg><span class="nm">nw_100_percent.pak</span><span class="dt">2017/7/20 15:03</span><span class="ty">PAK <span class="c">文件</span></span><span class="sz">451 KB</span></div><div class="row" style="top:369.0px"><svg class="fi" viewBox="0 0 18 18"><path d="M2.5 .5h9.5l3.5 3.5v13.5h-13z" fill="#fafafa" stroke="#8a8a8a"/><path d="M12 .5v3.5h3.5" fill="none" stroke="#8a8a8a"/></svg><span class="nm">nw_200_percent.pak</span><span class="dt">2017/7/20 15:03</span><span class="ty">PAK <span class="c">文件</span></span><span class="sz">720 KB</span></div><div class="row" style="top:396.0px"><svg class="fi" viewBox="0 0 18 18"><path d="M2.5 .5h9.5l3.5 3.5v13.5h-13z" fill="#fafafa" stroke="#8a8a8a"/><path d="M12 .5v3.5h3.5" fill="none" stroke="#8a8a8a"/><circle cx="7" cy="8" r="2.6" fill="#e4e4e4" stroke="#8f8f8f" stroke-width=".9"/><circle cx="7" cy="8" r=".9" fill="#9a9a9a"/><circle cx="11" cy="11.6" r="2.1" fill="#e4e4e4" stroke="#8f8f8f" stroke-width=".9"/><circle cx="11" cy="11.6" r=".7" fill="#9a9a9a"/></svg><span class="nm">nw_elf.dll</span><span class="dt">2017/7/20 15:03</span><span class="ty"><span class="c">应用程序扩展</span></span><span class="sz">526 KB</span></div><div class="row sel" style="top:423.0px"><svg class="fi" style="width:18px;left:5px" viewBox="0 0 18 18"><path d="M1 3.200L4.200 .8 17 14.200l-3.200 2.800z" fill="#3a86b4"/><path d="M13.800 .8l3.200 3L5.200 16.600 1 17.200l.8-4z" fill="#2c3238"/><path d="M1 3.200L4.200 .8 9 5.800 5.800 8.500z" fill="#2c3238" opacity=".75"/></svg><span class="nm">nwjs<span class="c">界面设置</span>.exe</span><span class="dt">2026/1/25 14:34</span><span class="ty"><span class="c">应用程序</span></span><span class="sz">13,007 KB</span></div><div class="row" style="top:450.0px"><svg class="fi" viewBox="0 0 18 18"><path d="M2.5 .5h9.5l3.5 3.5v13.5h-13z" fill="#fafafa" stroke="#8a8a8a"/><path d="M12 .5v3.5h3.5" fill="none" stroke="#8a8a8a"/></svg><span class="nm">resources.pak</span><span class="dt">2017/7/20 15:03</span><span class="ty">PAK <span class="c">文件</span></span><span class="sz">5,991 KB</span></div><div class="row" style="top:477.0px"><svg class="fi" viewBox="0 0 18 18"><path d="M2.5 .5h9.5l3.5 3.5v13.5h-13z" fill="#fafafa" stroke="#8a8a8a"/><path d="M12 .5v3.5h3.5" fill="none" stroke="#8a8a8a"/></svg><span class="nm">snapshot_blob.bin</span><span class="dt">2017/7/20 15:03</span><span class="ty">BIN <span class="c">文件</span></span><span class="sz">1,522 KB</span></div></div> <!-- right scrollbar -->
 <div class="abs" style="left:1386px;top:113px;width:19px;height:535px;background:#f0f0f0"></div>
 <div class="abs" style="left:1386px;top:148px;width:19px;height:479px;background:#cdcdcd"></div>
 <svg class="abs" style="left:1390px;top:120px" width="11" height="8" viewBox="0 0 11 8"><path d="M1 6.5L5.5 2 10 6.5" stroke="#505050" stroke-width="1.8" fill="none"/></svg>
 <!-- nav pane items -->
 <div class="abs nv" style="top:508px">文档</div>
 <div class="abs nv" style="top:538px">下载</div>
 <div class="abs nv" style="top:568px">音乐</div>
 <div class="abs nv" style="top:598px">桌面</div>
 <div class="abs nv" style="top:628px">系统 (C:)</div>
 <svg class="abs" style="left:42px;top:509px" width="16" height="18" viewBox="0 0 16 18"><path d="M1.5 .5h10l3 3v14h-13z" fill="#fdfdfd" stroke="#9a9a9a"/><path d="M4 5h6M4 7.5h8M4 10h8M4 12.500h8M4 15h6" stroke="#7fa6cf" stroke-width="1"/></svg>
 <svg class="abs" style="left:41px;top:540px" width="18" height="17" viewBox="0 0 18 17"><path d="M5 0h8v8h4.500L9 16.500.5 8H5z" fill="#3d8fdc"/></svg>
 <svg class="abs" style="left:43px;top:568px" width="14" height="19" viewBox="0 0 14 19"><path d="M6 1c1 3 6 4 5.500 9-1-3-3-4-4-4v9.500a3.500 3 0 1 1-1.500-2.700z" fill="#2e9ad9"/></svg>
 <div class="abs" style="left:40px;top:600px;width:19px;height:13px;background:#2490e8;border-bottom:2px solid #1b6fc0"></div>
 <svg class="abs" style="left:39px;top:629px" width="22" height="18" viewBox="0 0 22 18"><path d="M3 12l3-4h13l2 4v4H3z" fill="#d6d9dc"/><path d="M3 12h18v4H3z" fill="#b8bcc0"/><path d="M0 1h4v4H0zM5 1h4v4H5zM0 6h4v4H0zM5 6h4v4H5z" fill="#2ab0e8"/></svg>
 <!-- status bar -->
 <div class="abs st" style="left:18px">19 <span class="c">个项目</span></div>
 <div class="abs st" style="left:109px"><span class="c">选中</span> 1 <span class="c">个项目</span></div>
 <div class="abs st" style="left:209px">12.7 MB</div>
 <div class="abs" style="left:100px;top:652px;width:1px;height:18px;background:#f1f1f1"></div>
 <div class="abs" style="left:1346px;top:659px;width:27px;height:18px;background:#cde6f7;border:1px solid #7fbde6"></div>
 <svg class="abs" style="left:1352px;top:661px" width="18" height="12" viewBox="0 0 18 12"><path d="M1 1h3v3H1zM1 7h3v3H1z" fill="none" stroke="#666" stroke-width=".8"/><path d="M6 2.500h4M11 2.500h4M6 8.500h4M11 8.500h4" stroke="#666" stroke-width="1"/></svg>
 <div class="abs" style="left:1378px;top:660px;width:18px;height:11px;border:1px solid #999;background:linear-gradient(160deg,#fff 35%,#3b6a4e 60%,#8aa9b8 100%)"></div>
</div>
<div id="dlg"><div id="dlgin" style="position:absolute;left:-1px;top:0;width:454px;height:522px">
 <div class="abs" style="left:1px;top:0;width:453px;height:38px;background:#fff"></div>
 <svg class="abs" style="left:12px;top:9px" width="17" height="17" viewBox="0 0 17 17"><path d="M1.5 2.800L4 1l11.500 12.200L13 15.800z" fill="#3f8fbc"/><path d="M13.300 1l2.700 2.500L4.600 15.600 1 16.300l.6-3.600z" fill="#3a4148"/></svg>
 <div class="abs" style="left:36px;top:9px;font-size:15px;line-height:20px;color:#111;white-space:nowrap"><span style="font-size:16px;letter-spacing:.2px">nwjs</span>界面设置</div>
 <div class="abs" style="left:301px;top:18px;width:12px;height:1.200px;background:#222"></div>
 <div class="abs" style="left:359px;top:13px;width:12px;height:12px;border:1px solid #cfcfcf"></div>
 <svg class="abs" style="left:417px;top:12px" width="14" height="14" viewBox="0 0 14 14"><path d="M1 1l12 12M13 1L1 13" stroke="#222" stroke-width="1.200" fill="none"/></svg>

 <div class="abs lbl" style="top:112px">应用名称:</div>
 <div class="abs inp" style="left:171px;top:104px;width:207px;height:37px">Myapp</div>
 <div class="abs lbl" style="top:176px">窗口高度:</div>
 <div class="abs inp" style="left:171px;top:168px;width:207px;height:37px">720</div>
 <div class="abs lbl" style="top:221px">窗口宽度:</div>
 <div class="abs inp" style="left:171px;top:213px;width:207px;height:37px">1280</div>
 <div class="abs lbl" style="top:285px">右键菜单:</div>
 <div class="abs inp" style="left:171px;top:277px;width:123px;height:37px;font-size:16px">true</div>

 <div class="abs rad" style="left:82px;top:368px"><i></i></div>
 <div class="abs rl" style="left:104px">默认</div>
 <div class="abs rad" style="left:176px;top:368px"></div>
 <div class="abs rl" style="left:198px">最大化</div>
 <div class="abs rad" style="left:285px;top:368px"></div>
 <div class="abs rl" style="left:307px">全屏</div>

 <div class="abs" style="left:154px;top:418px;width:120px;height:59px;background:#f0f0f0;border-top:1px solid #fff;border-left:1px solid #fff;border-right:2px solid #6d6d6d;border-bottom:2px solid #6d6d6d;box-shadow:inset -1px -1px 0 #a8a8a8, inset 1px 1px 0 #e6e6e6"></div>
 <div class="abs" style="left:154px;top:436px;width:120px;text-align:center;font-size:20px;line-height:24px;color:#1a1a1a">生成应用</div>
</div></div>
<!-- IME bar -->
<div class="abs" style="left:1640px;top:787px;width:200px;height:29px;background:#fff;border:1px solid #b9b9b9"></div>
<svg class="abs" style="left:1614px;top:781px" width="40" height="38" viewBox="0 0 40 38"><g transform="rotate(-13 20 19)"><rect x="5" y="4" width="30" height="29" rx="4" fill="#e8501f"/><path d="M28 11c-5-3-15-3-16 2-1 5 15 3 15 8 0 5-11 5-17 2" stroke="#fff" stroke-width="4.200" fill="none" stroke-linecap="round"/></g></svg>
<div class="abs" style="left:1657px;top:790px;font-size:20px;line-height:22px;font-weight:bold;color:#2a6fb3">中</div>
<div class="abs" style="left:1687px;top:792px;width:6px;height:6px;border:1.500px solid #2a6fb3;border-radius:50%"></div>
<div class="abs" style="left:1694px;top:786px;font-size:22px;line-height:22px;font-weight:bold;color:#2a6fb3">,</div>
<svg class="abs" style="left:1712px;top:790px" width="22" height="22" viewBox="0 0 22 22"><circle cx="11" cy="11" r="9.200" fill="none" stroke="#2a6fb3" stroke-width="2"/><circle cx="7.800" cy="8.500" r="1.300" fill="#2a6fb3"/><circle cx="14.200" cy="8.500" r="1.300" fill="#2a6fb3"/><path d="M6.500 12.500c2 3.500 7 3.500 9 0" stroke="#2a6fb3" stroke-width="1.700" fill="none"/></svg>
<svg class="abs" style="left:1741px;top:790px" width="18" height="23" viewBox="0 0 18 23"><rect x="5.500" y="1" width="7" height="12" rx="3.500" fill="#2a6fb3"/><path d="M2.500 9.500c0 8.500 13 8.500 13 0" stroke="#2a6fb3" stroke-width="2" fill="none"/><path d="M9 16v4M5.500 20.500h7" stroke="#2a6fb3" stroke-width="2"/></svg>
<svg class="abs" style="left:1767px;top:793px" width="22" height="16" viewBox="0 0 22 16"><rect x=".5" y=".5" width="21" height="15" rx="2" fill="#2a6fb3"/><path d="M3 4h2M7 4h2M11 4h2M15 4h2M3 7.500h2M7 7.500h2M11 7.500h2M15 7.500h2M4 11.500h12" stroke="#fff" stroke-width="1.700"/></svg>
<svg class="abs" style="left:1796px;top:791px" width="22" height="22" viewBox="0 0 22 22"><circle cx="9" cy="6" r="4" fill="#c4c8cd"/><path d="M1 19c0-9 16-9 16 0z" fill="#c4c8cd"/><rect x="11" y="12" width="8" height="7" fill="#e3e5e8" stroke="#b5b9be"/></svg>
<div class="abs" style="left:1824px;top:795px;width:8px;height:7px;background:#2a6fb3;border-radius:2px"></div>
<!-- cursor highlight -->
<div class="abs" style="left:533px;top:475px;width:58px;height:58px;border-radius:50%;background:#ffff0a;mix-blend-mode:multiply"></div>
<svg class="abs" style="left:561px;top:503px" width="14" height="21" viewBox="0 0 14 21"><path d="M1 1v16l3.800-3.500 2.600 6 2.300-1-2.600-5.800H12z" fill="#fff" stroke="#000" stroke-width="1.100" stroke-linejoin="round"/></svg>
</div>
</body></html>
